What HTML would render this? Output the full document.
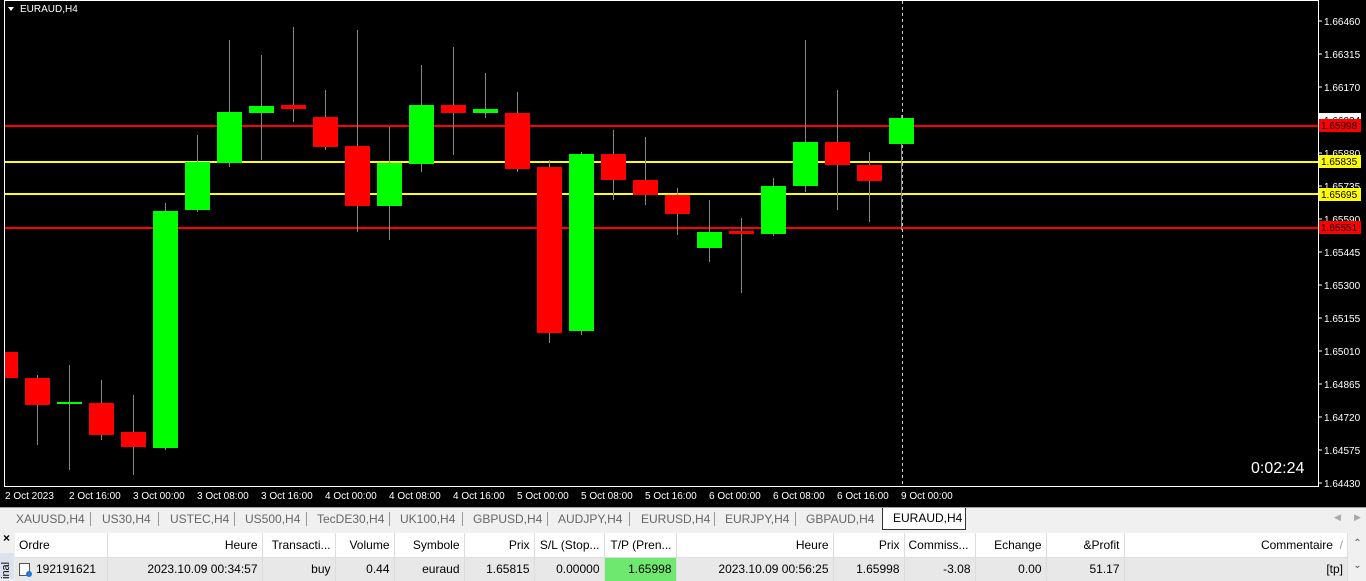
<!DOCTYPE html>
<html><head><style>
*{margin:0;padding:0;box-sizing:border-box}
body{width:1366px;height:579px;overflow:hidden;background:#f0f0f0;font-family:"Liberation Sans",sans-serif;font-size:12px;position:relative}
.abs{position:absolute}
.tabs{top:507px;left:0;width:1366px;height:22px;background:#f0f0f0;border-top:1px solid #a0a0a0}
.tab{position:absolute;top:4px;color:#666;font-size:12px}
.sep{position:absolute;top:4px;width:1px;height:14px;background:#999}
table{border-collapse:collapse;font-size:12px;table-layout:fixed}
td{height:24px;padding:0 4px;white-space:nowrap;overflow:hidden;border-right:1px solid #ddd}
</style></head><body>
<svg class="abs" style="left:0;top:0" width="1366" height="507" xmlns="http://www.w3.org/2000/svg">
<rect width="1366" height="507" fill="#000"/>
<rect x="4.5" y="0.5" width="1314" height="486" fill="none" stroke="#fff"/>
<g font-family="Liberation Sans" font-size="10" fill="#fff">
<polygon points="8,7 14,7 11,11" fill="#fff"/>
<text x="20" y="12">EURAUD,H4</text>
</g>
<g stroke="#fff">
<line x1="1318" y1="21" x2="1322" y2="21"/><line x1="1318" y1="54" x2="1322" y2="54"/><line x1="1318" y1="87" x2="1322" y2="87"/><line x1="1318" y1="120" x2="1322" y2="120"/><line x1="1318" y1="153" x2="1322" y2="153"/><line x1="1318" y1="186" x2="1322" y2="186"/><line x1="1318" y1="219" x2="1322" y2="219"/><line x1="1318" y1="252" x2="1322" y2="252"/><line x1="1318" y1="285" x2="1322" y2="285"/><line x1="1318" y1="318" x2="1322" y2="318"/><line x1="1318" y1="351" x2="1322" y2="351"/><line x1="1318" y1="384" x2="1322" y2="384"/><line x1="1318" y1="417" x2="1322" y2="417"/><line x1="1318" y1="450" x2="1322" y2="450"/><line x1="1318" y1="483" x2="1322" y2="483"/>
</g>
<rect x="1319" y="113" width="42" height="8" fill="#fff"/>
<g font-family="Liberation Sans" font-size="10" fill="#fff">
<text x="1324" y="25">1.66460</text><text x="1324" y="58">1.66315</text><text x="1324" y="91">1.66170</text><text x="1324" y="124" fill="#000">1.66034</text><text x="1324" y="157">1.65880</text><text x="1324" y="190">1.65735</text><text x="1324" y="223">1.65590</text><text x="1324" y="256">1.65445</text><text x="1324" y="289">1.65300</text><text x="1324" y="322">1.65155</text><text x="1324" y="355">1.65010</text><text x="1324" y="388">1.64865</text><text x="1324" y="421">1.64720</text><text x="1324" y="454">1.64575</text><text x="1324" y="487">1.64430</text>
</g>
<line x1="5" y1="126" x2="1318" y2="126" stroke="#f00" stroke-width="2"/>
<line x1="5" y1="228" x2="1318" y2="228" stroke="#f00" stroke-width="2"/>
<line x1="5" y1="162" x2="1318" y2="162" stroke="#ff0" stroke-width="2"/>
<line x1="5" y1="194" x2="1318" y2="194" stroke="#ff0" stroke-width="2"/>
<rect x="1319" y="119" width="42" height="13" fill="#f00"/><text x="1321" y="129" font-family="Liberation Sans" font-size="10" fill="#000">1.65998</text>
<rect x="1319" y="155" width="42" height="13" fill="#ff0"/><text x="1321" y="165" font-family="Liberation Sans" font-size="10" fill="#000">1.65835</text>
<rect x="1319" y="188" width="42" height="13" fill="#ff0"/><text x="1321" y="198" font-family="Liberation Sans" font-size="10" fill="#000">1.65695</text>
<rect x="1319" y="221" width="42" height="13" fill="#f00"/><text x="1321" y="231" font-family="Liberation Sans" font-size="10" fill="#000">1.65551</text>
<line x1="902.5" y1="1" x2="902.5" y2="486" stroke="#ccc" stroke-dasharray="3,3"/>
<g stroke="#888" stroke-width="1">
<line x1="37.5" y1="375" x2="37.5" y2="445"/><line x1="69.5" y1="365" x2="69.5" y2="470"/><line x1="101.5" y1="380" x2="101.5" y2="440"/><line x1="133.5" y1="395" x2="133.5" y2="475"/><line x1="165.5" y1="203" x2="165.5" y2="450"/><line x1="197.5" y1="135" x2="197.5" y2="212"/><line x1="229.5" y1="40" x2="229.5" y2="167"/><line x1="261.5" y1="55" x2="261.5" y2="160"/><line x1="293.5" y1="27" x2="293.5" y2="122"/><line x1="325.5" y1="90" x2="325.5" y2="150"/><line x1="357.5" y1="30" x2="357.5" y2="232"/><line x1="389.5" y1="127" x2="389.5" y2="240"/><line x1="421.5" y1="65" x2="421.5" y2="172"/><line x1="453.5" y1="47" x2="453.5" y2="155"/><line x1="485.5" y1="73" x2="485.5" y2="118"/><line x1="517.5" y1="92" x2="517.5" y2="172"/><line x1="549.5" y1="160" x2="549.5" y2="343"/><line x1="581.5" y1="152" x2="581.5" y2="335"/><line x1="613.5" y1="130" x2="613.5" y2="200"/><line x1="645.5" y1="137" x2="645.5" y2="205"/><line x1="677.5" y1="188" x2="677.5" y2="235"/><line x1="709.5" y1="200" x2="709.5" y2="262"/><line x1="741.5" y1="218" x2="741.5" y2="293"/><line x1="773.5" y1="178" x2="773.5" y2="236"/><line x1="805.5" y1="40" x2="805.5" y2="192"/><line x1="837.5" y1="90" x2="837.5" y2="210"/><line x1="869.5" y1="152" x2="869.5" y2="222"/><line x1="901.5" y1="115" x2="901.5" y2="230"/>
</g>
<g fill="#f00">
<rect x="5" y="352" width="13" height="26"/><rect x="25" y="378" width="25" height="27"/><rect x="89" y="403" width="25" height="32"/><rect x="121" y="432" width="25" height="15"/><rect x="281" y="105" width="25" height="4"/><rect x="313" y="117" width="25" height="30"/><rect x="345" y="146" width="25" height="60"/><rect x="441" y="105" width="25" height="8"/><rect x="505" y="113" width="25" height="56"/><rect x="537" y="167" width="25" height="166"/><rect x="601" y="154" width="25" height="26"/><rect x="633" y="180" width="25" height="15"/><rect x="665" y="195" width="25" height="19"/><rect x="729" y="231" width="25" height="3"/><rect x="825" y="142" width="25" height="23"/><rect x="857" y="165" width="25" height="16"/>
</g>
<g fill="#00ff00">
<rect x="57" y="402" width="25" height="2"/><rect x="153" y="211" width="25" height="237"/><rect x="185" y="162" width="25" height="48"/><rect x="217" y="112" width="25" height="51"/><rect x="249" y="106" width="25" height="7"/><rect x="377" y="163" width="25" height="43"/><rect x="409" y="105" width="25" height="59"/><rect x="473" y="109" width="25" height="4"/><rect x="569" y="154" width="25" height="177"/><rect x="697" y="232" width="25" height="16"/><rect x="761" y="186" width="25" height="48"/><rect x="793" y="142" width="25" height="44"/><rect x="889" y="118" width="25" height="26"/>
</g>
<text x="1251" y="473" font-family="Liberation Sans" font-size="16" fill="#fff">0:02:24</text>
<g font-family="Liberation Sans" font-size="10" fill="#fff">
<text x="5" y="499">2 Oct 2023</text><text x="69" y="499">2 Oct 16:00</text><text x="133" y="499">3 Oct 00:00</text><text x="197" y="499">3 Oct 08:00</text><text x="261" y="499">3 Oct 16:00</text><text x="325" y="499">4 Oct 00:00</text><text x="389" y="499">4 Oct 08:00</text><text x="453" y="499">4 Oct 16:00</text><text x="517" y="499">5 Oct 00:00</text><text x="581" y="499">5 Oct 08:00</text><text x="645" y="499">5 Oct 16:00</text><text x="709" y="499">6 Oct 00:00</text><text x="773" y="499">6 Oct 08:00</text><text x="837" y="499">6 Oct 16:00</text><text x="901" y="499">9 Oct 00:00</text>
</g>
</svg>
<div class="abs tabs">
<span class="tab" style="left:16px">XAUUSD,H4</span><span class="sep" style="left:90px"></span>
<span class="tab" style="left:102px">US30,H4</span><span class="sep" style="left:158px"></span>
<span class="tab" style="left:170px">USTEC,H4</span><span class="sep" style="left:234px"></span>
<span class="tab" style="left:245px">US500,H4</span><span class="sep" style="left:306px"></span>
<span class="tab" style="left:317px">TecDE30,H4</span><span class="sep" style="left:389px"></span>
<span class="tab" style="left:400px">UK100,H4</span><span class="sep" style="left:462px"></span>
<span class="tab" style="left:473px">GBPUSD,H4</span><span class="sep" style="left:547px"></span>
<span class="tab" style="left:558px">AUDJPY,H4</span><span class="sep" style="left:629px"></span>
<span class="tab" style="left:641px">EURUSD,H4</span><span class="sep" style="left:714px"></span>
<span class="tab" style="left:725px">EURJPY,H4</span><span class="sep" style="left:795px"></span>
<span class="tab" style="left:806px">GBPAUD,H4</span>
<div class="abs" style="left:882px;top:0;width:84px;height:22px;background:#fff;border:1px solid #333;border-top:none;padding:3px 0 0 10px;color:#000">EURAUD,H4</div>
<span class="tab" style="left:1334px;color:#aaa;font-size:9px">◀</span><span class="tab" style="left:1354px;color:#aaa;font-size:9px">▶</span>
</div>
<div class="abs" style="left:0;top:529px;width:14px;height:50px;background:#f0f0f0"><div style="font-size:12px;font-weight:bold;padding-left:3px;margin-top:2px">×</div><div style="position:absolute;top:24px;left:0;width:14px;height:26px;background:#dbe4ee;font-size:11px;writing-mode:vertical-rl;transform:rotate(180deg);overflow:hidden">inal</div></div>
<div class="abs" style="left:15px;top:533px;width:1333px;height:46px;background:#fff">
<table style="width:1333px">
<colgroup><col style="width:92px"><col style="width:155px"><col style="width:73px"><col style="width:59px"><col style="width:70px"><col style="width:70px"><col style="width:70px"><col style="width:72px"><col style="width:157px"><col style="width:71px"><col style="width:71px"><col style="width:71px"><col style="width:78px"><col></colgroup>
<tr style="background:#fff;border-bottom:1px solid #ddd">
<td>Ordre</td><td style="text-align:right">Heure</td><td style="text-align:right">Transacti...</td><td style="text-align:right">Volume</td><td style="text-align:right">Symbole</td><td style="text-align:right">Prix</td><td style="text-align:right">S/L (Stop...</td><td style="text-align:right">T/P (Pren...</td><td style="text-align:right">Heure</td><td style="text-align:right">Prix</td><td>Commiss...</td><td style="text-align:right">Echange</td><td style="text-align:right">&amp;Profit</td><td style="text-align:right">Commentaire &nbsp;<span style="color:#999">/</span></td>
</tr>
<tr style="background:#e8e8e8">
<td><span style="display:inline-block;width:11px;height:13px;border:1px solid #555;background:#fff;vertical-align:middle;margin-right:6px;position:relative"><span style="position:absolute;right:-3px;bottom:-2px;width:6px;height:6px;border-radius:50%;background:#1e7ad8"></span></span>192191621</td><td style="text-align:right">2023.10.09 00:34:57</td><td style="text-align:right">buy</td><td style="text-align:right">0.44</td><td style="text-align:right">euraud</td><td style="text-align:right">1.65815</td><td style="text-align:right">0.00000</td><td style="text-align:right;background:#6ee86e">1.65998</td><td style="text-align:right">2023.10.09 00:56:25</td><td style="text-align:right">1.65998</td><td style="text-align:right">-3.08</td><td style="text-align:right">0.00</td><td style="text-align:right">51.17</td><td style="text-align:right">[tp]</td>
</tr></table></div>
<div class="abs" style="left:1349px;top:533px;width:17px;height:46px;background:#f0f0f0;color:#555;font-size:10px;text-align:center;line-height:22px">⌃<br>⌄</div>
</body></html>
